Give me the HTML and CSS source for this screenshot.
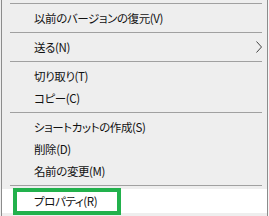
FILE: index.html
```html
<!DOCTYPE html>
<html lang="ja">
<head>
<meta charset="utf-8">
<link rel="stylesheet" href="styles.css">
</head>
<body>
<div class="menu">
  <div class="sep"></div>
  <div class="item"><span class="label">以前のバージョンの復元(V)</span></div>
  <div class="sep"></div>
  <div class="item"><span class="label">送る(N)</span>
    <svg class="chev" width="6" height="12" viewBox="0 0 6 12"><path d="M0.5 0.5 L5.5 6 L0.5 11.5" fill="none" stroke="#444" stroke-width="1"/></svg>
  </div>
  <div class="sep"></div>
  <div class="item"><span class="label">切り取り(T)</span></div>
  <div class="item"><span class="label">コピー(C)</span></div>
  <div class="sep"></div>
  <div class="item"><span class="label">ショートカットの作成(S)</span></div>
  <div class="item"><span class="label">削除(D)</span></div>
  <div class="item"><span class="label">名前の変更(M)</span></div>
  <div class="sep"></div>
  <div class="item active"><span class="label">プロパティ(R)</span></div>
  <div class="mark"></div>
</div>
</body>
</html>
```

FILE: styles.css
```css
html, body {
  margin: 0;
  padding: 0;
  background: #ffffff;
}
.menu {
  position: relative;
  box-sizing: border-box;
  width: 269px;
  height: 216px;
  background: #eeeeee;
  border-left: 1px solid #eeeeee;
  border-right: 1px solid #f7f7f7;
  display: flex;
  flex-direction: column;
  font-family: "Noto Sans CJK JP", "Noto Sans", sans-serif;
  font-size: 11.5px;
  letter-spacing: -0.4px;
  font-feature-settings: "palt";
  color: #111;
  overflow: hidden;
}
.menu::before {
  content: "";
  position: absolute;
  left: 0;
  top: 0;
  bottom: 0;
  width: 1px;
  background: #8c8c8c;
}
.menu::after {
  content: "";
  position: absolute;
  right: 0;
  top: 0;
  bottom: 0;
  width: 1px;
  background: #8c8c8c;
}
.sep {
  height: 1px;
  margin: 3px 6px 3px 9px;
  background: #a0a0a0;
  flex: none;
}
.item {
  height: 22px;
  flex: none;
  display: flex;
  align-items: center;
  padding-left: 33px;
  padding-right: 6px;
  line-height: 22px;
}
.label {
  flex: 1;
  white-space: nowrap;
}
.item.active {
  height: 24px;
  background: #ffffff;
}
.mark {
  position: absolute;
  left: 12px;
  top: 188px;
  width: 108px;
  height: 27px;
  box-sizing: border-box;
  border: 4px solid #22b14c;
}
```
